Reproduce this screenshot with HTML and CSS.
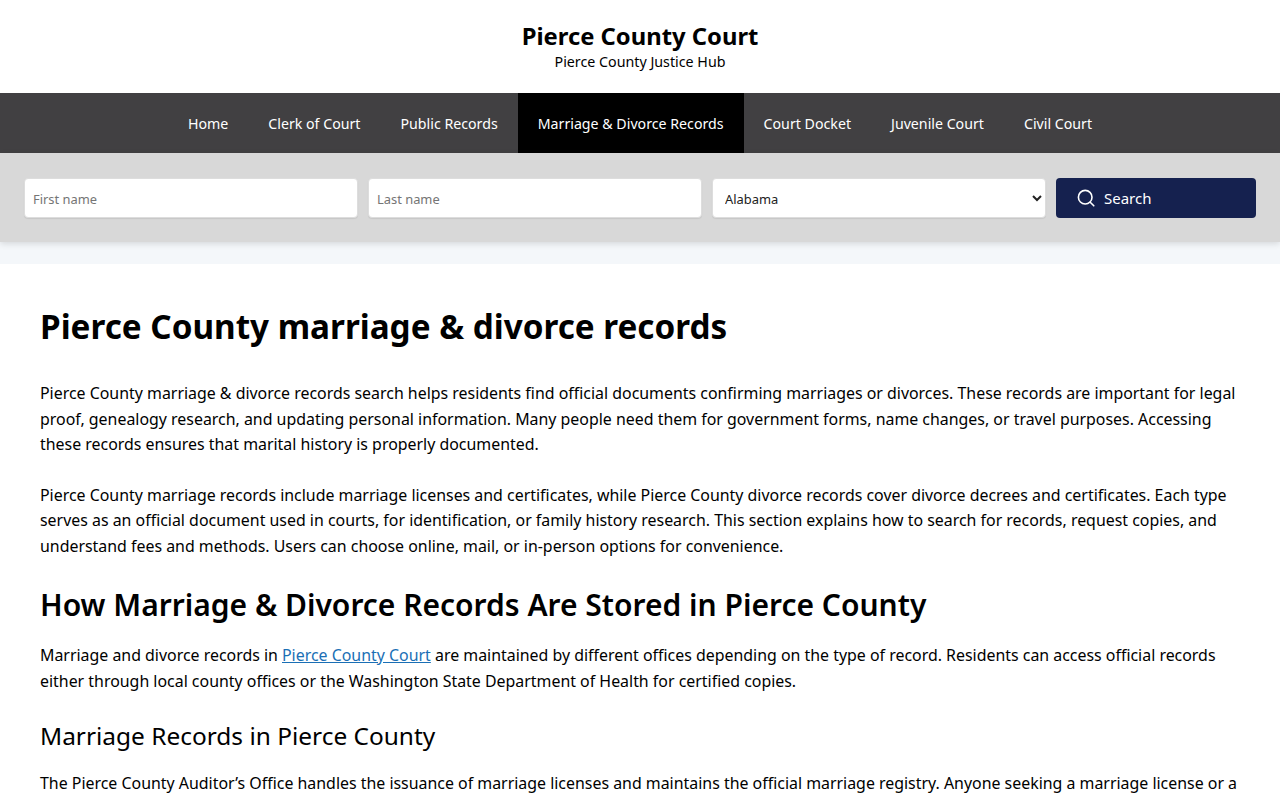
FILE: index.html
```html
<!DOCTYPE html>
<html lang="en">
<head>
<meta charset="utf-8">
<title>Pierce County marriage &amp; divorce records</title>
<link rel="stylesheet" href="styles.css">
</head>
<body>
<header class="site-header">
  <div class="site-title">Pierce County Court</div>
  <div class="site-tagline">Pierce County Justice Hub</div>
</header>
<nav class="main-nav">
  <a href="#">Home</a>
  <a href="#">Clerk of Court</a>
  <a href="#">Public Records</a>
  <a href="#" class="active">Marriage &amp; Divorce Records</a>
  <a href="#">Court Docket</a>
  <a href="#">Juvenile Court</a>
  <a href="#">Civil Court</a>
</nav>
<form class="search-bar">
  <input class="field" type="text" placeholder="First name">
  <input class="field" type="text" placeholder="Last name">
  <select class="field select"><option>Alabama</option></select>
  <button class="search-btn" type="button">
    <svg class="search-icon" viewBox="0 0 18 18" width="18" height="18" fill="none" stroke="currentColor" stroke-width="1.6" stroke-linecap="round"><circle cx="8.2" cy="8.2" r="6.8"/><path d="M13.2 13.2L16.8 16.8"/></svg>
    <span>Search</span>
  </button>
</form>
<div class="band"></div>
<main class="content">
  <h1>Pierce County marriage &amp; divorce records</h1>
  <p>Pierce County marriage &amp; divorce records search helps residents find official documents confirming marriages or divorces. These records are important for legal proof, genealogy research, and updating personal information. Many people need them for government forms, name changes, or travel purposes. Accessing these records ensures that marital history is properly documented.</p>
  <p>Pierce County marriage records include marriage licenses and certificates, while Pierce County divorce records cover divorce decrees and certificates. Each type serves as an official document used in courts, for identification, or family history research. This section explains how to search for records, request copies, and understand fees and methods. Users can choose online, mail, or in-person options for convenience.</p>
  <h2>How Marriage &amp; Divorce Records Are Stored in Pierce County</h2>
  <p class="tight">Marriage and divorce records in <a href="#">Pierce County Court</a> are maintained by different offices depending on the type of record. Residents can access official records either through local county offices or the Washington State Department of Health for certified copies.</p>
  <h3>Marriage Records in Pierce County</h3>
  <p class="tight">The Pierce County Auditor’s Office handles the issuance of marriage licenses and maintains the official marriage registry. Anyone seeking a marriage license or a certified copy of a marriage record can contact the office directly for assistance.</p>
</main>
</body>
</html>
```
FILE: styles.css
```css
* { box-sizing: border-box; }
html, body { margin: 0; padding: 0; }
body {
  font-family: "Noto Sans", "Open Sans", sans-serif;
  color: #000;
  background: #fff;
  font-size: 15.92px;
  line-height: 25.5px;
}
.site-header {
  height: 93px;
  padding-top: 20px;
  text-align: center;
}
.site-title { font-size: 23.8px; font-weight: 700; line-height: 32px; }
.site-tagline { font-size: 14.25px; line-height: 19px; }
.main-nav {
  height: 60px;
  background: #414042;
  display: flex;
  justify-content: center;
}
.main-nav a {
  color: #fff;
  text-decoration: none;
  font-size: 14.2px;
  line-height: 60px;
  padding: 1px 20px 0;
}
.main-nav a.active { background: #000; }
.search-bar {
  height: 89px;
  background: #d8d8d8;
  padding: 25px 24px 0;
  display: flex;
  gap: 10px;
  align-items: flex-start;
  box-shadow: 0 2px 6px rgba(0,0,0,.12);
  position: relative;
}
.field {
  flex: 1 1 0;
  min-width: 0;
  height: 40px;
  border: 1px solid #ddd;
  border-radius: 4px;
  background: #fff;
  font-family: inherit;
  font-size: 12.9px;
  padding: 2px 8px 0;
  color: #222;
  box-shadow: 0 1px 1px rgba(0,0,0,.08);
}
.field::placeholder { color: #757575; opacity: 1; }
.select { padding-left: 8px; }
.search-btn {
  flex: 0 0 200px;
  height: 40px;
  background: #15214f;
  color: #fff;
  border: 0;
  border-radius: 4px;
  font-family: inherit;
  font-size: 15px;
  display: flex;
  align-items: center;
  gap: 9px;
  padding: 0 0 0 21px;
}
.band { height: 22px; background: #f4f7fa; }
.content { padding: 40px 40px 0; }
h1 { font-size: 33.25px; line-height: 44px; font-weight: 700; margin: 0 0 33px; }
h2 { font-size: 30px; line-height: 42px; font-weight: 600; margin: 0 0 17px; }
h3 { font-size: 24.45px; line-height: 32px; font-weight: 400; margin: 26px 0 19px; }
p { margin: 0 0 25px; }
p.tight { margin-bottom: 0; }
a { color: #1a6fb5; }
```
